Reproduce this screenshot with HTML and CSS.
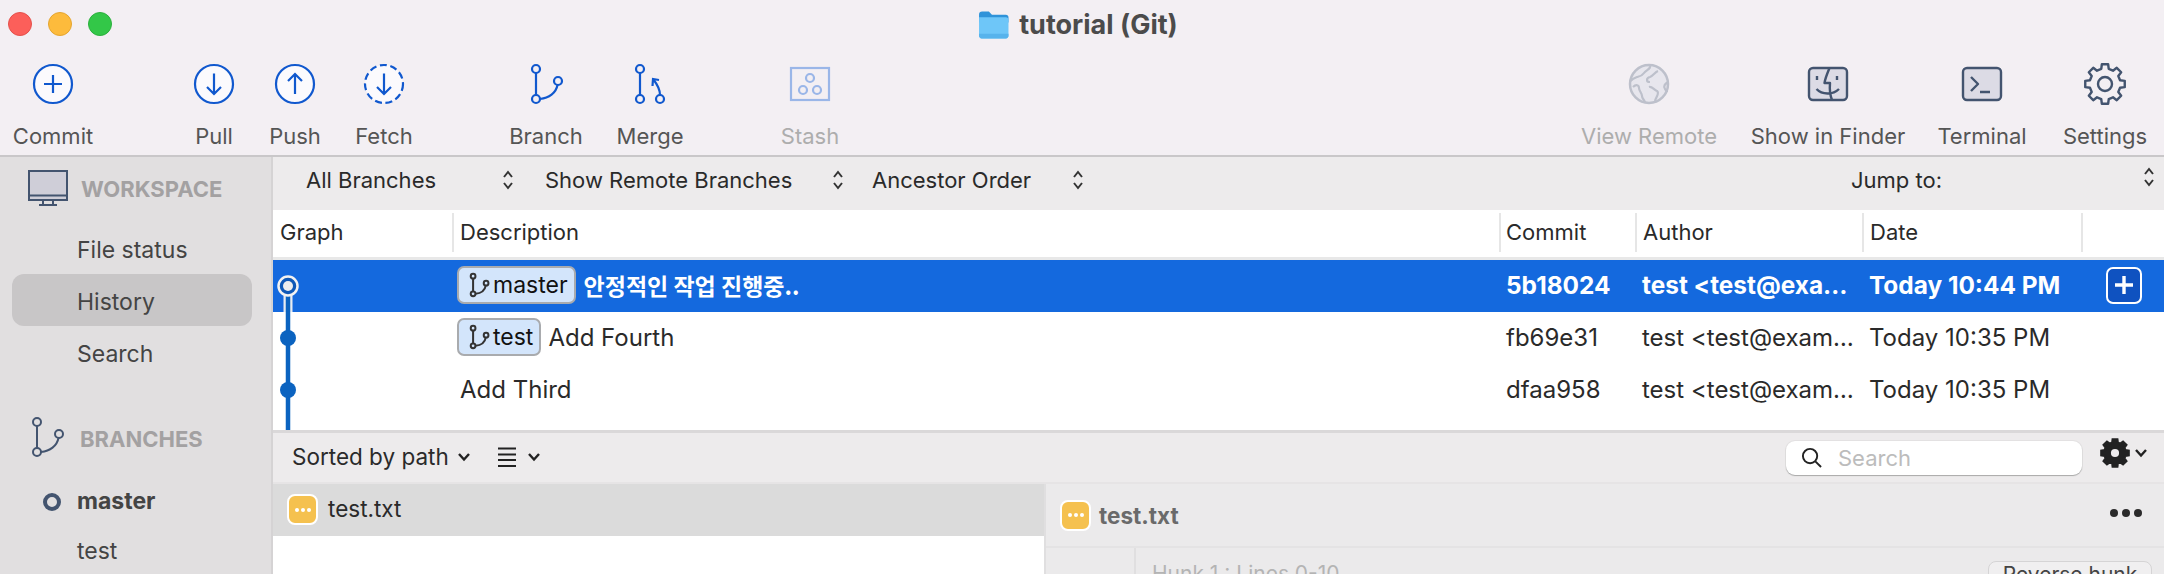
FILE: index.html
```html
<!DOCTYPE html>
<html lang="en">
<head>
<meta charset="utf-8">
<title>tutorial (Git)</title>
<link rel="stylesheet" href="styles.css">
</head>
<body>
<svg class="defs" width="0" height="0" aria-hidden="true">
  <symbol id="branch" viewBox="0 0 44 44">
    <circle cx="12" cy="7" r="4"/><circle cx="12" cy="37" r="4"/><circle cx="34" cy="19" r="4"/>
    <path d="M12 11V33M16 37C25 36 32 31 33.500 23"/>
  </symbol>
  <symbol id="updown" viewBox="0 0 12 22">
    <path d="M2 8 6 3 10 8M2 14 6 19 10 14"/>
  </symbol>
  <symbol id="chev" viewBox="0 0 14 10">
    <path d="M2 2 7 7.500 12 2"/>
  </symbol>
  <symbol id="gear" viewBox="0 0 44 44">
    <path transform="translate(22 22)" d="M3.130 -19.750 3.750 -15.040 7.980 -13.290 11.760 -16.180 16.180 -11.760 13.290 -7.980 15.040 -3.750 19.750 -3.130 19.750 3.130 15.040 3.750 13.290 7.980 16.180 11.760 11.760 16.180 7.980 13.290 3.750 15.040 3.130 19.750 -3.130 19.750 -3.750 15.040 -7.980 13.290 -11.760 16.180 -16.180 11.760 -13.290 7.980 -15.040 3.750 -19.750 3.130 -19.750 -3.130 -15.040 -3.750 -13.290 -7.980 -16.180 -11.760 -11.760 -16.180 -7.980 -13.290 -3.750 -15.040 -3.130 -19.750Z"/>
  </symbol>
</svg>
<div class="window">
  <header class="titlebar">
    <div class="lights">
      <span class="light red"></span><span class="light amber"></span><span class="light green"></span>
    </div>
    <div class="title">
      <svg class="folder" viewBox="0 0 30 28">
        <path class="folder-back" d="M1 4.500C1 2.500 2 1.500 4 1.500H10.500L13.500 4.500H27C28.500 4.500 29.500 5.500 29.500 7V12H1Z"/>
        <path class="folder-front" d="M1 7H27C28.500 7 29.500 8 29.500 9.500V25C29.500 26.500 28.500 27.500 27 27.500H3.500C2 27.500 1 26.500 1 25Z"/>
        <path class="folder-band" d="M1 23H29.500V25C29.500 26.500 28.500 27.500 27 27.500H3.500C2 27.500 1 26.500 1 25Z"/>
      </svg>
      <span>tutorial (Git)</span>
    </div>
  </header>

  <nav class="toolbar">
    <div class="tool t-commit">
      <svg class="tool-icon blue" viewBox="0 0 44 44"><circle cx="22" cy="22" r="19"/><path d="M22 13V31M13 22H31"/></svg>
      <span>Commit</span>
    </div>
    <div class="tool t-pull">
      <svg class="tool-icon blue" viewBox="0 0 44 44"><circle cx="22" cy="22" r="19"/><path d="M22 11.500V31.500M15 25 22 32 29 25"/></svg>
      <span>Pull</span>
    </div>
    <div class="tool t-push">
      <svg class="tool-icon blue" viewBox="0 0 44 44"><circle cx="22" cy="22" r="19"/><path d="M22 12V32M15 19 22 12 29 19"/></svg>
      <span>Push</span>
    </div>
    <div class="tool t-fetch">
      <svg class="tool-icon blue" viewBox="0 0 44 44"><circle class="dashed" cx="22" cy="22" r="19"/><path d="M22 11.500V31.500M15 25 22 32 29 25"/></svg>
      <span>Fetch</span>
    </div>
    <div class="tool t-branch">
      <svg class="tool-icon blue line"><use href="#branch"/></svg>
      <span>Branch</span>
    </div>
    <div class="tool t-merge">
      <svg class="tool-icon blue line" viewBox="0 0 44 44">
        <circle cx="12" cy="7" r="4"/><circle cx="12" cy="37" r="4"/><circle cx="32" cy="37" r="4"/>
        <path d="M12 11V33M32 33C32 27 29 22 25 17M24.500 24 25 17 31 18"/>
      </svg>
      <span>Merge</span>
    </div>
    <div class="tool t-stash disabled">
      <svg class="tool-icon stash" viewBox="0 0 44 44">
        <rect x="3" y="6" width="38" height="32"/>
        <circle cx="22" cy="16" r="4"/><circle cx="15" cy="28" r="4"/><circle cx="29" cy="28" r="4"/>
      </svg>
      <span>Stash</span>
    </div>
    <div class="tool t-remote disabled">
      <svg class="tool-icon globe" viewBox="0 0 44 44">
        <circle cx="22" cy="22" r="19"/>
        <path d="M23 4C24 7 19 8 17 11 15 14 14 14 10 15 7 16 5 17 3.500 19M6 25C9 22 12 23 12 26 12 29 15 31 15 34 15 37 18 38 18 41M22 25C25 24 27 28 30 29 33 31 29 35 28 39M23 20C19 20 19 16 23 15 26 14 28 10 31 9M41 20C38 22 36 24 38 27 39 29 40 29 40 30"/>
      </svg>
      <span>View Remote</span>
    </div>
    <div class="tool t-finder">
      <svg class="tool-icon slate" viewBox="0 0 44 44">
        <rect class="panel" x="3" y="6" width="38" height="32" rx="4"/>
        <path d="M23.500 6C21 12 19 17 18.500 21H24C23.500 27 24 33 26 38M11 14V18M31 14V18M10.500 27C16 33 27 33 33 27"/>
      </svg>
      <span>Show in Finder</span>
    </div>
    <div class="tool t-terminal">
      <svg class="tool-icon slate" viewBox="0 0 44 44">
        <rect class="panel" x="3" y="6" width="38" height="32" rx="4"/>
        <path d="M11 15 18 22 11 29M20 30H30"/>
      </svg>
      <span>Terminal</span>
    </div>
    <div class="tool t-settings">
      <svg class="tool-icon slate" viewBox="0 0 44 44">
        <use href="#gear"/>
        <circle cx="22" cy="22" r="7"/>
      </svg>
      <span>Settings</span>
    </div>
  </nav>

  <div class="body">
    <aside class="sidebar">
      <div class="side-head">
        <svg class="head-icon monitor" viewBox="0 0 40 36">
          <rect x="1" y="1" width="38" height="29"/>
          <path d="M1 25.500H39M15 30V34M25 30V34M11 35H29"/>
        </svg>
        <span>WORKSPACE</span>
      </div>
      <ul class="side-list">
        <li class="side-item">File status</li>
        <li class="side-item active">History</li>
        <li class="side-item">Search</li>
      </ul>
      <div class="side-head branches">
        <svg class="head-icon branch-icon"><use href="#branch"/></svg>
        <span>BRANCHES</span>
      </div>
      <ul class="side-list tight">
        <li class="side-item current"><span class="ring"></span>master</li>
        <li class="side-item">test</li>
      </ul>
    </aside>

    <main class="main">
      <div class="filters">
        <div class="select s-all"><span>All Branches</span><svg class="updown"><use href="#updown"/></svg></div>
        <div class="select s-remote"><span>Show Remote Branches</span><svg class="updown"><use href="#updown"/></svg></div>
        <div class="select s-order"><span>Ancestor Order</span><svg class="updown"><use href="#updown"/></svg></div>
        <div class="jump"><span>Jump to:</span><svg class="updown jump-arrows"><use href="#updown"/></svg></div>
      </div>

      <div class="log">
        <div class="row head">
          <div class="c-graph">Graph</div>
          <div class="c-desc">Description</div>
          <div class="c-commit">Commit</div>
          <div class="c-author">Author</div>
          <div class="c-date">Date</div>
          <div class="c-act"></div>
        </div>
        <div class="row selected">
          <div class="c-graph"></div>
          <div class="c-desc">
            <span class="badge"><svg class="badge-icon"><use href="#branch"/></svg>master</span>
            <span class="msg-ko">안정적인 작업 진행중..</span>
          </div>
          <div class="c-commit">5b18024</div>
          <div class="c-author">test &lt;test@exa…</div>
          <div class="c-date">Today 10:44 PM</div>
          <div class="c-act"><span class="plus"><svg viewBox="0 0 24 24"><path d="M12 3V21M3 12H21"/></svg></span></div>
        </div>
        <div class="row">
          <div class="c-graph"></div>
          <div class="c-desc">
            <span class="badge"><svg class="badge-icon"><use href="#branch"/></svg>test</span>
            <span>Add Fourth</span>
          </div>
          <div class="c-commit">fb69e31</div>
          <div class="c-author">test &lt;test@exam…</div>
          <div class="c-date">Today 10:35 PM</div>
          <div class="c-act"></div>
        </div>
        <div class="row">
          <div class="c-graph"></div>
          <div class="c-desc">Add Third</div>
          <div class="c-commit">dfaa958</div>
          <div class="c-author">test &lt;test@exam…</div>
          <div class="c-date">Today 10:35 PM</div>
          <div class="c-act"></div>
        </div>
        <svg class="graph" viewBox="0 0 30 176" width="30" height="176">
          <path class="graph-halo" d="M15 32V52"/>
          <path class="graph-line" d="M15 32V176"/>
          <circle class="graph-dot" cx="15" cy="78" r="8"/>
          <circle class="graph-dot" cx="15" cy="130" r="8"/>
          <circle class="graph-ring" cx="15" cy="26" r="9.500"/>
          <circle class="graph-core" cx="15" cy="26" r="5"/>
        </svg>
      </div>

      <div class="changes-bar">
        <span class="sort">Sorted by path<svg class="chev"><use href="#chev"/></svg></span>
        <span class="view">
          <svg class="list-icon" viewBox="0 0 18 20"><path d="M0 1.500H18M0 7.500H18M0 13H18M0 19H18"/></svg>
          <svg class="chev"><use href="#chev"/></svg>
        </span>
        <div class="search">
          <svg class="mag" viewBox="0 0 22 22"><circle cx="9.500" cy="9.500" r="7.500"/><path d="M15 15 21 21"/></svg>
          <span>Search</span>
        </div>
        <span class="gear-menu">
          <svg class="gear-solid" viewBox="0 0 44 44"><use href="#gear"/><circle cx="22" cy="22" r="6"/></svg>
          <svg class="chev"><use href="#chev"/></svg>
        </span>
      </div>

      <div class="changes">
        <div class="files">
          <div class="file-row">
            <span class="status"><i></i><i></i><i></i></span>
            <span class="file-name">test.txt</span>
          </div>
        </div>
        <div class="diff">
          <div class="diff-head">
            <span class="status"><i></i><i></i><i></i></span>
            <span class="diff-name">test.txt</span>
            <span class="more"><i></i><i></i><i></i></span>
          </div>
          <div class="diff-body">
            <div class="hunk">
              <span class="hunk-title">Hunk 1 : Lines 0-10</span>
              <span class="hunk-btn">Reverse hunk</span>
            </div>
          </div>
        </div>
      </div>
    </main>
  </div>
</div>
</body>
</html>
```

FILE: styles.css
```css
* { box-sizing: border-box; }

html, body {
  margin: 0;
  width: 2164px;
  height: 574px;
  overflow: hidden;
}

body {
  font-family: Inter, "Noto Sans CJK KR", "Liberation Sans", sans-serif;
  font-size: 22px;
  color: #2a2a2a;
  background: #fff;
}

.defs { position: absolute; }

ul { list-style: none; margin: 0; padding: 0; }

.window {
  display: flex;
  flex-direction: column;
  width: 2164px;
  height: 574px;
  overflow: hidden;
}

/* title bar */
.titlebar {
  flex: none;
  display: flex;
  align-items: center;
  justify-content: center;
  height: 48px;
  background: #f3eff3;
  position: relative;
}

.lights {
  position: absolute;
  left: 8px;
  top: 12px;
  display: flex;
  gap: 16px;
}

.light {
  width: 24px;
  height: 24px;
  border-radius: 50%;
}

.red { background: #fc5f5a; border: 1px solid #e5504b; }
.amber { background: #fdbb3c; border: 1px solid #e5a52f; }
.green { background: #33c748; border: 1px solid #2bb03d; }

.title {
  display: flex;
  align-items: center;
  gap: 10px;
  font-size: 27px;
  font-weight: 700;
  color: #4b4b4b;
  margin-left: -8px;
}

.folder { width: 31px; height: 29px; }
.folder-back { fill: #2f93d9; }
.folder-front { fill: #6ec6f8; }
.folder-band { fill: #57b3ec; }

/* toolbar */
.toolbar {
  flex: none;
  display: flex;
  height: 109px;
  padding-top: 14px;
  background: #f3eff3;
  border-bottom: 2px solid #c9c7c9;
}

.tool {
  flex: none;
  display: flex;
  flex-direction: column;
  align-items: center;
  gap: 18px;
  color: #555;
  font-size: 22px;
  line-height: 24px;
  white-space: nowrap;
}

.tool.disabled { color: #adadad; }

.t-commit { width: 106px; }
.t-pull { width: 80px; margin-left: 68px; }
.t-push { width: 82px; }
.t-fetch { width: 96px; }
.t-branch { width: 110px; margin-left: 59px; }
.t-merge { width: 98px; }
.t-stash { width: 100px; margin-left: 61px; }
.t-remote { width: 178px; margin-left: auto; }
.t-finder { width: 180px; }
.t-terminal { width: 128px; }
.t-settings { width: 118px; }

.tool-icon {
  width: 44px;
  height: 44px;
  fill: none;
  stroke-width: 2.200;
}

.tool-icon.blue { stroke: #1058ce; }
.tool-icon.blue circle { fill: #fbfafd; }
.tool-icon.line circle { fill: none; }
.dashed { stroke-dasharray: 7 3.600; }

.tool-icon.stash { stroke: #9ab6e8; }
.tool-icon.globe { stroke: #bdc0cb; }
.tool-icon.globe circle { fill: #e7e6ed; stroke-width: 2.500; }

.tool-icon.slate { stroke: #43546f; stroke-width: 2.400; stroke-linejoin: round; }
.panel { fill: #dcdbe5; }

/* body */
.body {
  flex: 1;
  display: flex;
  min-height: 0;
}

.sidebar {
  flex: none;
  width: 273px;
  padding-top: 6px;
  background: #e1dfe0;
  border-right: 2px solid #d5d3d4;
  color: #444;
  font-size: 23px;
}

.side-head {
  display: flex;
  align-items: center;
  height: 52px;
  color: #a3a1a2;
  font-weight: 700;
  font-size: 22px;
}

.head-icon { flex: none; fill: none; stroke: #43546f; stroke-width: 2; }

.monitor {
  width: 40px;
  height: 36px;
  margin: -2px 13px 0 28px;
}

.monitor rect { fill: #cfced8; }

.branches { margin-top: 35px; }

.branch-icon {
  width: 44px;
  height: 44px;
  margin: -4px 11px 0 25px;
  stroke-width: 2;
}

.side-list { margin-top: 7px; }
.side-list.tight { margin-top: 11px; }

.side-item {
  display: flex;
  align-items: center;
  position: relative;
  height: 52px;
  margin: 0 19px 0 12px;
  padding: 3px 0 0 65px;
  border-radius: 12px;
}

.tight .side-item { height: 50px; padding-top: 0; }

.side-item.active { background: #c8c6c7; }
.side-item.current { font-weight: 700; }

.ring {
  position: absolute;
  left: 31px;
  top: 17px;
  width: 18px;
  height: 18px;
  border-radius: 50%;
  border: 4px solid #43546f;
}

/* main */
.main {
  flex: 1;
  min-width: 0;
  display: flex;
  flex-direction: column;
}

.filters {
  flex: none;
  display: flex;
  align-items: center;
  height: 53px;
  padding: 0 0 8px 33px;
  background: #edebec;
  color: #2a2a2a;
}

.select {
  flex: none;
  display: flex;
  align-items: center;
  justify-content: space-between;
  padding-right: 30px;
}

.s-all { width: 239px; padding-right: 31px; }
.s-remote { width: 327px; padding-right: 28px; }
.s-order { width: 242px; }

.updown {
  flex: none;
  width: 12px;
  height: 22px;
  fill: none;
  stroke: #333;
  stroke-width: 2;
}

.jump {
  margin-left: auto;
  width: 313px;
  display: flex;
  align-items: center;
  justify-content: space-between;
  padding-right: 9px;
}

.jump-arrows { margin-top: -6px; }

.log {
  flex: none;
  height: 220px;
  position: relative;
  overflow: hidden;
  background: #fff;
  font-size: 24px;
}

.row {
  display: grid;
  grid-template-columns: 179px 1047px 136px 227px 219px 83px;
  align-items: center;
  height: 52px;
  padding-bottom: 2px;
}

.row > div {
  padding-left: 7px;
  white-space: nowrap;
  overflow: hidden;
}

.row.head {
  height: 50px;
  font-size: 22px;
  border-bottom: 3px solid #e8e8e8;
  align-items: stretch;
  padding-top: 3px;
  padding-bottom: 5px;
}

.row.head > div {
  display: flex;
  align-items: center;
  padding-left: 6px;
  padding-bottom: 2px;
  border-left: 2px solid #e6e6e6;
}

.row.head > .c-graph {
  border-left: none;
  padding-left: 7px;
}

.row.head > .c-commit { padding-left: 5px; }

.row .c-desc {
  display: flex;
  align-items: center;
  gap: 7px;
  padding-left: 8px;
}

.row.selected {
  background: #1469de;
  color: #fff;
  font-size: 24.400px;
  font-weight: 700;
}

.row.selected .c-desc { gap: 8px; }

.badge {
  display: inline-flex;
  align-items: center;
  height: 38px;
  margin-left: -3px;
  padding: 0 6px 0 7px;
  gap: 1px;
  background: #d3e5fb;
  border: 2px solid #a9abae;
  border-radius: 7px;
  color: #111;
  font-size: 23px;
  font-weight: 400;
}

.badge-icon {
  width: 26px;
  height: 26px;
  fill: none;
  stroke: #333;
  stroke-width: 3.400;
}

.msg-ko { font-family: "Noto Sans CJK KR", Inter, sans-serif; font-weight: 700; font-size: 23px; }

.plus {
  display: flex;
  align-items: center;
  justify-content: center;
  width: 36px;
  height: 37px;
  margin-left: 18px;
  border: 2px solid #fff;
  border-radius: 7px;
  background: #0f52c0;
}

.plus svg {
  width: 24px;
  height: 24px;
  fill: none;
  stroke: #fff;
  stroke-width: 3.400;
}

.graph {
  position: absolute;
  left: 0;
  top: 50px;
}

.graph-halo { stroke: #e8ecf2; stroke-width: 9; fill: none; }
.graph-line { stroke: #0b63c0; stroke-width: 4.500; fill: none; }
.graph-dot { fill: #0b63c0; }
.graph-ring { fill: #0f59b8; stroke: #f2f2f2; stroke-width: 2.500; }
.graph-core { fill: #eeeeee; }

.changes-bar {
  flex: none;
  display: flex;
  align-items: center;
  height: 54px;
  padding: 0 0 0 19px;
  background: #edebec;
  border-top: 3px solid #dad8d9;
  border-bottom: 2px solid #e6e4e5;
  font-size: 22.500px;
}

.chev {
  flex: none;
  width: 14px;
  height: 10px;
  fill: none;
  stroke: #222;
  stroke-width: 2.400;
}

.sort {
  display: flex;
  align-items: center;
  gap: 8px;
  margin-bottom: 2px;
}

.view {
  display: flex;
  align-items: center;
  gap: 11px;
  margin: 0 0 2px 27px;
}

.list-icon {
  width: 18px;
  height: 20px;
  fill: none;
  stroke: #222;
  stroke-width: 2;
}

.search {
  display: flex;
  align-items: center;
  gap: 16px;
  width: 296px;
  height: 34px;
  margin-left: auto;
  padding-left: 15px;
  background: #fff;
  border-radius: 9px;
  box-shadow: 0 1px 1px #a9a9a9, 0 0 0 1px #e3e1e2;
  color: #bcbcbc;
  font-size: 22px;
}

.mag {
  flex: none;
  width: 21px;
  height: 21px;
  fill: none;
  stroke: #222;
  stroke-width: 2;
}

.gear-menu {
  display: flex;
  align-items: center;
  gap: 4px;
  width: 82px;
  padding: 0 0 10px 18px;
}

.gear-solid {
  width: 30px;
  height: 30px;
  fill: #222;
  stroke: #222;
  stroke-width: 4;
}

.gear-solid circle { fill: #edebec; stroke: none; }

.changes {
  flex: 1;
  min-height: 0;
  display: flex;
  font-size: 22.500px;
}

.files {
  flex: none;
  width: 771px;
  background: #fff;
}

.file-row {
  display: flex;
  align-items: center;
  gap: 10px;
  height: 52px;
  padding: 0 0 1px 14px;
  background: #dbdbdb;
}

.file-name { margin-bottom: 2px; }

.status {
  flex: none;
  display: inline-flex;
  align-items: center;
  justify-content: center;
  gap: 2px;
  width: 31px;
  height: 31px;
  background: #f5c14f;
  border: 2px solid #fff;
  border-radius: 8px;
}

.status i {
  width: 4px;
  height: 4px;
  border-radius: 50%;
  background: #fff;
}

.diff {
  flex: 1;
  min-width: 0;
  background: #ebeaeb;
  border-left: 2px solid #e0dfe0;
}

.diff-head {
  display: flex;
  align-items: center;
  gap: 8px;
  height: 64px;
  padding: 0 22px 0 14px;
  border-bottom: 2px solid #e4e3e4;
}

.diff-name {
  font-weight: 700;
  color: #6a6a6a;
}

.more {
  display: flex;
  gap: 4px;
  margin-left: auto;
  padding-bottom: 5px;
}

.more i {
  width: 8px;
  height: 8px;
  border-radius: 50%;
  background: #2b2b2b;
}

.diff-body {
  padding-left: 88px;
  font-size: 21px;
}

.hunk {
  display: flex;
  align-items: flex-start;
  justify-content: space-between;
  height: 60px;
  padding: 13px 12px 0 16px;
  border-left: 2px solid #e0dfe0;
}

.hunk-title {
  color: #b4b4b4;
}

.hunk-btn {
  display: flex;
  justify-content: center;
  width: 164px;
  height: 34px;
  border: 1px solid #d5d4d5;
  border-radius: 8px;
  background: #f0eff0;
  color: #444;
}
```
